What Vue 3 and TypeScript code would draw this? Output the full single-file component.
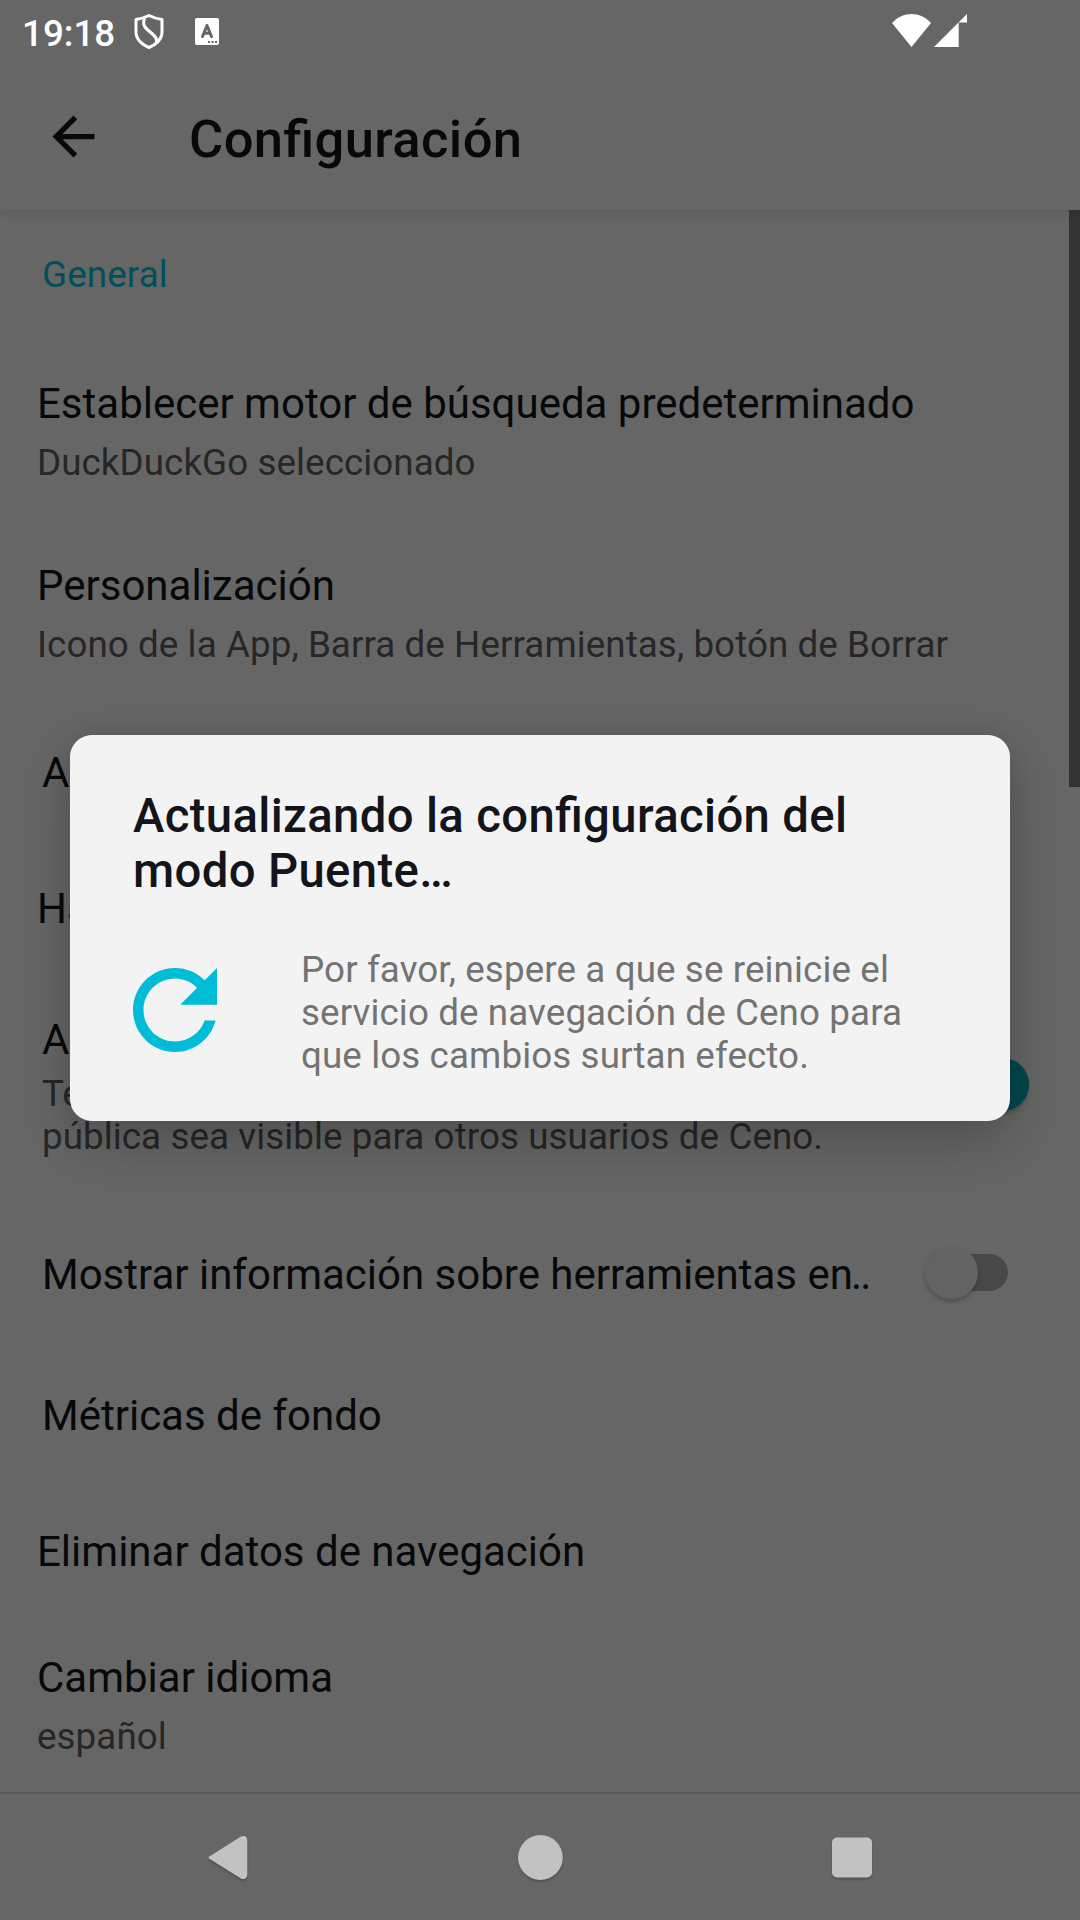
<script setup lang="ts">
interface Row {
  title: string
  tail?: string
  summary?: string[]
  inset?: boolean
  toggle?: 'on' | 'off'
  height: number
}

const rows: Row[] = [
  { title: 'Establecer motor de búsqueda predeterminado', summary: ['DuckDuckGo seleccionado'], height: 185 },
  { title: 'Personalización', summary: ['Icono de la App, Barra de Herramientas, botón de Borrar'], height: 179 },
  { title: 'A', inset: true, height: 139 },
  { title: 'Ha', height: 133 },
  { title: 'A', summary: ['Te', 'pública sea visible para otros usuarios de Ceno.'], inset: true, toggle: 'on', height: 223 },
  { title: 'Mostrar información sobre herramientas en', tail: '..', inset: true, toggle: 'off', height: 153 },
  { title: 'Métricas de fondo', inset: true, height: 129 },
  { title: 'Eliminar datos de navegación', height: 143 },
  { title: 'Cambiar idioma', summary: ['español'], height: 165 },
]
</script>

<template>
  <div class="screen">
    <header class="top">
      <div class="status">
        <span class="clock">19:18</span>
        <svg class="shield" width="30" height="36" viewBox="0 0 30 36" fill="none" stroke="#fff" stroke-width="3" stroke-linejoin="round">
          <path d="M15 1.500 Q21 4.500 28 5.500 V18 C28 25.500 21.500 31 15 33.500 C8.500 31 2 25.500 2 18 V5.500 Q9 4.500 15 1.500 Z" />
          <path d="M10.500 4 C8.500 9.500 9.500 12.500 13.500 15.800 L18.500 20 C22.500 23.500 23.500 25.500 22.500 28.500" stroke-width="3.200" />
        </svg>
        <svg class="keyboard" width="24" height="27" viewBox="0 0 24 27">
          <rect width="24" height="27" rx="2" fill="#fff" />
          <path d="M7.500 18.500 L12 7.500 L16.500 18.500 M9 15.200 H15" fill="none" stroke="#666" stroke-width="3" stroke-linecap="round" stroke-linejoin="round" />
          <path d="M13 23h2v2h-2zM16.500 23h2v2h-2zM20 23h2v2h-2z" fill="#666" />
        </svg>
        <svg class="wifi" width="39" height="33" viewBox="0 0 39 33" fill="#fff"><path d="M0 9 C11 -3 28 -3 39 9 L19.500 33 Z" /></svg>
        <svg class="signal" width="33" height="33" viewBox="0 0 33 33" fill="#fff"><path d="M33 0 V8.500 H24.700 V33 H0 Z" /></svg>
      </div>
      <div class="toolbar">
        <svg class="back" width="63" height="63" viewBox="0 0 24 24" fill="#08080a"><path d="M20 11H7.830l5.590-5.590L12 4l-8 8 8 8 1.410-1.410L7.830 13H20v-2z" /></svg>
        <h1>Configuración</h1>
      </div>
    </header>

    <main class="content">
      <div class="list">
        <div class="category">General</div>
        <div v-for="(row, i) in rows" :key="i" class="row" :class="{ inset: row.inset }" :style="{ height: row.height + 'px' }">
          <div class="texts">
            <div class="title">{{ row.title }}<span v-if="row.tail" class="tail">{{ row.tail }}</span></div>
            <div v-if="row.summary" class="summary" :class="{ tight: row.toggle }">
              <div v-for="line in row.summary" :key="line">{{ line }}</div>
            </div>
          </div>
          <div v-if="row.toggle" class="switch" :class="row.toggle"><i class="thumb"></i></div>
        </div>
      </div>
      <div class="scrollbar"></div>
    </main>

    <nav class="navbar">
      <svg width="42" height="50" viewBox="0 0 42 50"><path d="M4 22.500 L33.500 3.800 Q36 2.400 38 3.300 Q40.300 4.400 40.300 7.500 V41.500 Q40.300 44.600 38 45.700 Q36 46.600 33.500 45.200 L4 26.800 Q-1 24.600 4 22.500 Z" /></svg>
      <svg width="46" height="50" viewBox="0 0 46 50"><circle cx="23.400" cy="24.500" r="22.400" /></svg>
      <svg width="42" height="50" viewBox="0 0 42 50"><rect x="1" y="4.500" width="40" height="40" rx="5" /></svg>
    </nav>

    <section class="dialog">
      <h2>Actualizando la configuración del<br />modo Puente…</h2>
      <div class="body">
        <svg width="126" height="126" viewBox="0 0 24 24" fill="#00bcd7"><path d="M17.650 6.350C16.200 4.900 14.210 4 12 4c-4.420 0-7.990 3.580-7.990 8s3.570 8 7.990 8c3.730 0 6.840-2.550 7.730-6h-2.080c-.82 2.330-3.040 4-5.650 4-3.310 0-6-2.690-6-6s2.690-6 6-6c1.660 0 3.140.69 4.220 1.780L13 11h7V4l-2.350 2.350z" /></svg>
        <p>Por favor, espere a que se reinicie el<br />servicio de navegación de Ceno para<br />que los cambios surtan efecto.</p>
      </div>
    </section>
  </div>
</template>

<style>
body { margin: 0; background: #666; }
</style>

<style scoped>
.screen { position: relative; display: flex; flex-direction: column; width: 1080px; height: 1920px; overflow: hidden; background: #666; color: #07080a; font-family: Roboto, "Liberation Sans", sans-serif; }
.top { height: 210px; flex: none; box-shadow: 0 2px 10px rgba(0, 0, 0, .12); z-index: 1; }
.status { display: flex; align-items: flex-start; height: 63px; box-sizing: border-box; padding-left: 22px; }
.clock { width: 112px; padding-top: 12px; font-size: 36.75px; line-height: 43px; font-weight: 500; color: #fff; }
.shield { margin-top: 14px; }
.keyboard { margin: 18px 0 0 31px; }
.wifi { margin: 14px 0 0 673px; }
.signal { margin: 14px 0 0 3px; }
.toolbar { display: flex; align-items: center; height: 147px; padding-left: 42px; }
h1 { margin: 4px 0 0 84px; font-size: 52.5px; line-height: 62px; font-weight: 500; letter-spacing: .4px; font-feature-settings: "liga" 1; }
.content { display: flex; height: 1582px; flex: none; }
.list { width: 1069px; flex: none; }
.scrollbar { width: 11px; height: 577px; background: #333; }
.category { display: flex; align-items: center; height: 129px; padding-left: 42px; font-size: 36.75px; letter-spacing: .12px; color: #00505a; }
.row { display: flex; align-items: center; box-sizing: border-box; padding-left: 37px; }
.row.inset { padding-left: 42px; }
.texts { flex: 1; white-space: nowrap; }
.title { font-size: 42px; line-height: 49px; }
.tail { margin-left: -2px; letter-spacing: -1.6px; }
.summary { margin-top: 13px; font-size: 36.75px; line-height: 43px; letter-spacing: .08px; color: #262627; }
.summary.tight { margin-top: 8px; }
.switch { position: relative; display: flex; align-items: center; flex: none; width: 83px; height: 53px; }
.switch::before { content: ""; position: absolute; left: 10px; right: 0; top: 8px; height: 37px; border-radius: 19px; background: #484848; }
.switch.off { margin: -4px 61px 0 0; }
.switch.on { margin: -5px 40px 0 0; justify-content: flex-end; }
.thumb { position: relative; width: 53px; height: 53px; border-radius: 50%; background: #636363; box-shadow: 0 3px 4px rgba(0, 0, 0, .22); }
.switch.on .thumb { background: #00474f; }
.navbar { display: flex; align-items: center; justify-content: space-between; height: 126px; box-sizing: border-box; border-top: 2px solid #5b5b5b; padding: 4px 207px 0 207px; fill: #c2c2c2; }
.navbar svg { filter: drop-shadow(0 2px 1px rgba(0, 0, 0, .2)); }
.dialog { position: absolute; left: 70px; top: 735px; width: 940px; height: 386px; box-sizing: border-box; padding: 54px 63px 0; border-radius: 22px; background: #f3f3f3; box-shadow: 0 20px 60px rgba(0, 0, 0, .22), 0 0 24px rgba(0, 0, 0, .06); z-index: 2; }
h2 { margin: 0; font-size: 47.25px; line-height: 55.4px; font-weight: 500; letter-spacing: .36px; font-feature-settings: "liga" 1; color: #14141b; white-space: nowrap; }
.body { display: flex; margin: 47px 0 0 -21px; }
.body p { margin: 1px 0 0 63px; font-size: 36.75px; line-height: 43px; letter-spacing: .11px; color: #737373; white-space: nowrap; }
</style>
